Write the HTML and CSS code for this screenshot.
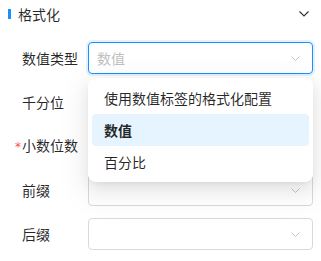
FILE: index.html
```html
<!DOCTYPE html>
<html lang="zh">

<head>
    <meta charset="UTF-8" />
    <meta name="viewport" content="width=device-width, initial-scale=1.0" />
    <title>格式化</title>
    <link rel="stylesheet" href="styles.css">
</head>

<body>

    <div class="panel">
        <div class="header">
            <span class="bar"></span>
            <span class="title">格式化</span>
            <svg class="collapse" width="10" height="6" viewBox="0 0 10 6">
                <path d="M0.5 0.5 L5 5 L9.5 0.5" fill="none" stroke="#333" stroke-width="1.2" />
            </svg>
        </div>

        <div class="form">
            <div class="row">
                <label class="label">数值类型</label>
                <div class="select-wrap">
                    <div class="select focused">
                        <span class="placeholder">数值</span>
                        <svg class="arrow" width="9" height="5" viewBox="0 0 9 5">
                            <path d="M0.5 0.5 L4.5 4.5 L8.5 0.5" fill="none" stroke="#c4c4c4" stroke-width="1" />
                        </svg>
                    </div>
                    <div class="dropdown">
                        <div class="option">使用数值标签的格式化配置</div>
                        <div class="option active">数值</div>
                        <div class="option">百分比</div>
                    </div>
                </div>
            </div>

            <div class="row">
                <label class="label">千分位</label>
                <div class="select-wrap">
                    <div class="select"></div>
                </div>
            </div>

            <div class="row">
                <label class="label"><span class="required">*</span>小数位数</label>
                <div class="select-wrap">
                    <div class="select"></div>
                </div>
            </div>

            <div class="row">
                <label class="label">前缀</label>
                <div class="select-wrap">
                    <div class="select">
                        <svg class="arrow" width="9" height="5" viewBox="0 0 9 5">
                            <path d="M0.5 0.5 L4.5 4.5 L8.5 0.5" fill="none" stroke="#c4c4c4" stroke-width="1" />
                        </svg>
                    </div>
                </div>
            </div>

            <div class="row">
                <label class="label">后缀</label>
                <div class="select-wrap">
                    <div class="select">
                        <svg class="arrow" width="9" height="5" viewBox="0 0 9 5">
                            <path d="M0.5 0.5 L4.5 4.5 L8.5 0.5" fill="none" stroke="#c4c4c4" stroke-width="1" />
                        </svg>
                    </div>
                </div>
            </div>
        </div>
    </div>

</body>

</html>
```

FILE: styles.css
```css
html,
body {
    margin: 0;
    padding: 0;
}

body {
    background: #fff;
    font-family: "Noto Sans CJK SC", "Noto Sans", sans-serif;
    font-size: 14px;
    color: rgba(0, 0, 0, 0.85);
}

.panel {
    padding: 0 8px;
}

.header {
    height: 28px;
    display: flex;
    align-items: center;
}

.bar {
    width: 3px;
    height: 10px;
    background: #1890ff;
    margin-right: 7px;
}

.title {
    flex: 1;
    line-height: 20px;
}

.collapse {
    margin-right: 4px;
}

.form {
    padding: 14px 0 0 14px;
    display: flex;
    flex-direction: column;
    gap: 12px;
}

.row {
    display: flex;
    align-items: center;
    height: 32px;
}

.label {
    width: 66px;
    line-height: 20px;
    white-space: nowrap;
}

.required {
    color: #ff4d4f;
    margin-left: -7px;
    margin-right: 1px;
    font-family: "DejaVu Sans", sans-serif;
    font-size: 12px;
}

.select-wrap {
    flex: 1;
    position: relative;
    height: 32px;
}

.select {
    box-sizing: border-box;
    height: 32px;
    border: 1px solid #d9d9d9;
    border-radius: 4px;
    display: flex;
    align-items: center;
    padding: 0 12px 0 8px;
}

.select.focused {
    border-color: #1890ff;
    box-shadow: 0 0 0 2px rgba(24, 144, 255, 0.12);
}

.placeholder {
    flex: 1;
    color: #bfbfbf;
}

.arrow {
    margin-left: auto;
}

.dropdown {
    position: absolute;
    top: 36px;
    left: 0;
    right: 0;
    background: #fff;
    border-radius: 8px;
    padding: 4px;
    box-shadow: 0 6px 16px 0 rgba(0, 0, 0, 0.08), 0 3px 6px -4px rgba(0, 0, 0, 0.12), 0 9px 28px 8px rgba(0, 0, 0, 0.05);
    z-index: 10;
}

.option {
    height: 32px;
    line-height: 32px;
    padding: 0 12px;
    border-radius: 4px;
}

.option.active {
    background: #e6f4ff;
    font-weight: 600;
}
```
